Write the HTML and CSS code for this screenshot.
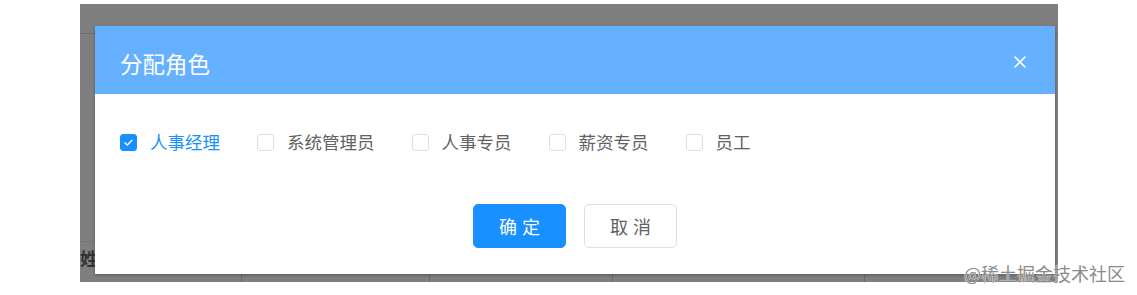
FILE: index.html
```html
<!DOCTYPE html>
<html lang="zh-CN">
<head>
  <meta charset="UTF-8" />
  <meta name="viewport" content="width=device-width, initial-scale=1.0" />
  <title>分配角色</title>
  <link rel="stylesheet" href="styles.css">
</head>
<body>
  <div class="stage">
    <div class="page">
      <div class="page-top"></div>
      <div class="page-row">
        <span class="page-label">姓名</span>
        <div class="page-cells">
          <span class="page-cell"></span>
          <span class="page-cell"></span>
          <span class="page-cell"></span>
          <span class="page-cell"></span>
        </div>
      </div>
    </div>
    <div class="mask"></div>
    <div class="dialog">
      <div class="dialog-header">
        <span class="dialog-title">分配角色</span>
        <button class="dialog-close" aria-label="关闭">
          <svg width="12" height="12" viewBox="0 0 12 12"><path d="M1 1 L11 11 M11 1 L1 11" stroke="#fff" stroke-width="1.6" stroke-linecap="round" fill="none"/></svg>
        </button>
      </div>
      <div class="dialog-body">
        <label class="checkbox is-checked">
          <span class="checkbox-box">
            <svg width="11" height="9" viewBox="0 0 11 9"><path d="M1.5 4.5 L4.3 7 L9.5 1.8" stroke="#fff" stroke-width="1.3" fill="none"/></svg>
          </span>
          <span class="checkbox-label">人事经理</span>
        </label>
        <label class="checkbox">
          <span class="checkbox-box"></span>
          <span class="checkbox-label">系统管理员</span>
        </label>
        <label class="checkbox">
          <span class="checkbox-box"></span>
          <span class="checkbox-label">人事专员</span>
        </label>
        <label class="checkbox">
          <span class="checkbox-box"></span>
          <span class="checkbox-label">薪资专员</span>
        </label>
        <label class="checkbox">
          <span class="checkbox-box"></span>
          <span class="checkbox-label">员工</span>
        </label>
      </div>
      <div class="dialog-footer">
        <button class="btn btn-primary">确定</button>
        <button class="btn">取消</button>
      </div>
    </div>
  </div>
  <div class="watermark">@稀土掘金技术社区</div>
</body>
</html>
```

FILE: styles.css
```css
body { margin: 0; padding: 4px 0 0 80px; background: #fff; font-family: "Noto Sans CJK SC", "Noto Sans", sans-serif; width: 1137px; height: 295px; box-sizing: border-box; position: relative; overflow: hidden; }
.stage { position: relative; width: 978px; height: 278px; overflow: hidden; background: #fff; }
.page { height: 100%; display: flex; flex-direction: column; justify-content: space-between; }
.page-top { margin-top: 29px; height: 1px; background: #ddd; }
.page-row { display: flex; align-items: flex-end; height: 40px; border-top: 1px solid #eee; }
.page-label { font-size: 18px; font-weight: bold; color: #666; line-height: 20px; margin-bottom: 14px; width: 161px; flex: none; }
.page-cells { display: flex; height: 8px; }
.page-cell { width: 188px; height: 8px; border-left: 1px solid #d0d0d0; box-sizing: border-box; }
.page-cell:nth-child(2) { width: 183px; }
.page-cell:nth-child(3) { width: 252px; }
.mask { position: absolute; inset: 0; background: rgba(0, 0, 0, 0.5); }
.dialog { position: absolute; left: 15px; top: 22px; width: 960px; background: #fff; box-shadow: 0 1px 3px rgba(0, 0, 0, 0.3); }
.dialog-header { position: relative; height: 68px; box-sizing: border-box; padding: 22px 25px 0; background: #66b1ff; }
.dialog-title { font-size: 22.5px; line-height: 30px; color: #fff; }
.dialog-close { position: absolute; right: 29px; top: 30px; padding: 0; border: none; background: none; width: 12px; height: 12px; display: flex; cursor: pointer; }
.dialog-body { display: flex; align-items: center; height: 22px; padding: 37px 25px 38px; }
.checkbox { display: flex; align-items: center; margin-right: 37px; cursor: pointer; }
.checkbox-box { width: 17px; height: 17px; box-sizing: border-box; border: 1px solid #dcdfe6; border-radius: 3px; background: #fff; display: flex; align-items: center; justify-content: center; }
.checkbox-label { padding-left: 13px; font-size: 17.5px; line-height: 22px; color: #606266; }
.checkbox.is-checked .checkbox-box { background: #1890ff; border-color: #1890ff; }
.checkbox.is-checked .checkbox-label { color: #1890ff; }
.dialog-footer { display: flex; justify-content: center; gap: 18px; padding: 13px 25px 26px; }
.btn { width: 93px; height: 44px; border: 1px solid #dcdfe6; border-radius: 5px; background: #fff; color: #606266; font-family: inherit; font-size: 18px; letter-spacing: 5px; text-indent: 5px; cursor: pointer; }
.btn-primary { background: #1890ff; border-color: #1890ff; color: #fff; }
.watermark { position: absolute; right: 12px; bottom: 11px; font-size: 18px; line-height: 22px; color: #8a8a8a; text-shadow: 0 0 1px #fff, 0 0 1px #fff; }
```
